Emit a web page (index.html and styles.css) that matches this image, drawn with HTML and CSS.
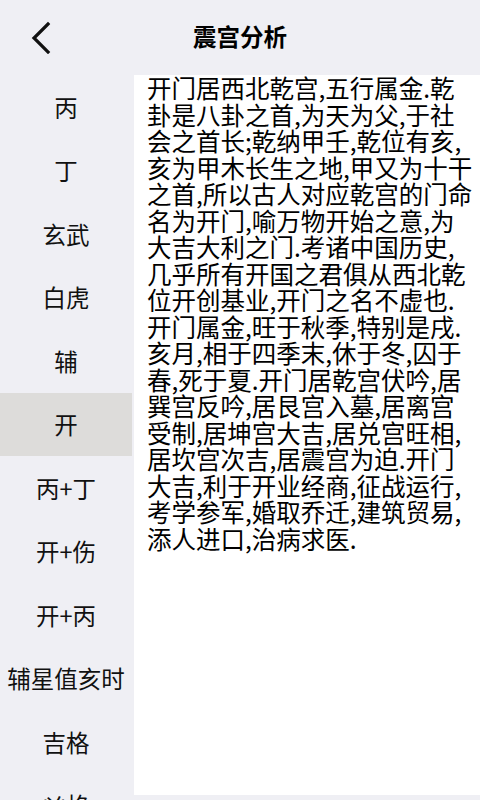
FILE: index.html
```html
<!DOCTYPE html>
<html lang="zh-CN">
<head>
<meta charset="utf-8">
<title>震宫分析</title>
<link rel="stylesheet" href="styles.css">
</head>
<body>
<div class="app">
  <header class="topbar">
    <span class="back">
      <svg width="24" height="34" viewBox="0 0 24 34"><path d="M18 4 L4 18 L18 32" fill="none" stroke="#111" stroke-width="3.2" stroke-linecap="square"/></svg>
    </span>
    <h1 class="title">震宫分析</h1>
  </header>
  <main class="main">
    <nav class="sidebar">
      <div class="item">丙</div>
      <div class="item">丁</div>
      <div class="item">玄武</div>
      <div class="item">白虎</div>
      <div class="item">辅</div>
      <div class="item active">开</div>
      <div class="item">丙+丁</div>
      <div class="item">开+伤</div>
      <div class="item">开+丙</div>
      <div class="item">辅星值亥时</div>
      <div class="item">吉格</div>
      <div class="item">凶格</div>
    </nav>
    <section class="content">
      <p class="text">开门居西北乾宫,五行属金.乾<br>卦是八卦之首,为天为父,于社<br>会之首长;乾纳甲壬,乾位有亥,<br>亥为甲木长生之地,甲又为十干<br>之首,所以古人对应乾宫的门命<br>名为开门,喻万物开始之意,为<br>大吉大利之门.考诸中国历史,<br>几乎所有开国之君俱从西北乾<br>位开创基业,开门之名不虚也.<br>开门属金,旺于秋季,特别是戌.<br>亥月,相于四季末,休于冬,囚于<br>春,死于夏.开门居乾宫伏吟,居<br>巽宫反吟,居艮宫入墓,居离宫<br>受制,居坤宫大吉,居兑宫旺相,<br>居坎宫次吉,居震宫为迫.开门<br>大吉,利于开业经商,征战运行,<br>考学参军,婚取乔迁,建筑贸易,<br>添人进口,治病求医.</p>
    </section>
  </main>
</div>
</body>
</html>
```
FILE: styles.css
```css
html, body {
  margin: 0;
  padding: 0;
  background: #efeff4;
}
.app {
  width: 480px;
  height: 800px;
  overflow: hidden;
  display: flex;
  flex-direction: column;
  font-family: "Noto Sans CJK SC", "Noto Sans", sans-serif;
  color: #000;
}
.topbar {
  height: 75px;
  flex: none;
  display: flex;
  align-items: center;
  position: relative;
  justify-content: center;
}
.back {
  position: absolute;
  left: 30px;
  top: 20px;
  width: 24px;
  height: 34px;
}
.back svg { display: block; }
.title {
  margin: 0;
  font-size: 23.5px;
  font-weight: 700;
  line-height: 1;
  margin-top: -2px;
}
.main {
  flex: 1;
  display: flex;
  gap: 2px;
  min-height: 0;
}
.sidebar {
  width: 132px;
  flex: none;
  display: flex;
  flex-direction: column;
}
.item {
  height: 63.5px;
  flex: none;
  display: flex;
  align-items: center;
  justify-content: center;
  font-size: 23.5px;
  color: #111;
  white-space: nowrap;
}
.item.active {
  background: #dddcda;
}
.content {
  flex: 1;
  background: #fff;
  padding: 0 0 0 13px;
  margin-bottom: 5px;
}
.text {
  margin: 0;
  font-size: 24.5px;
  line-height: 26.5px;
  white-space: nowrap;
  color: #000;
}
```
